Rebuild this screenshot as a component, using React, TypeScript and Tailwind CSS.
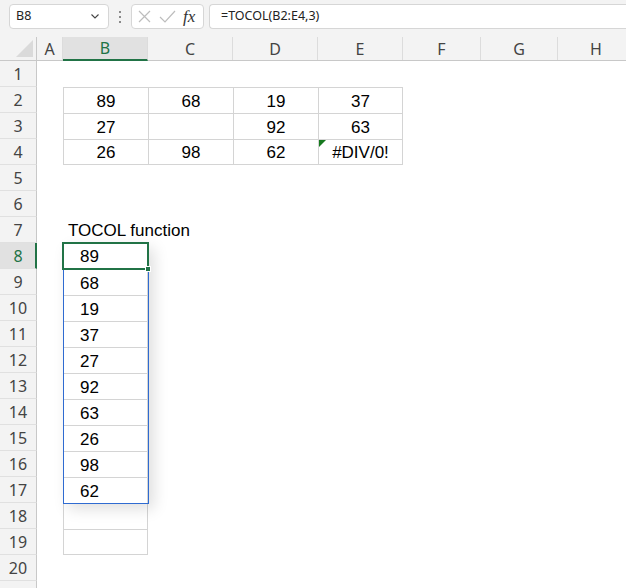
import React from "react";

const COLS = [
  { k: "A", w: "w-[26px]" },
  { k: "B", w: "w-[85px]" },
  { k: "C", w: "w-[85px]" },
  { k: "D", w: "w-[85px]" },
  { k: "E", w: "w-[85px]" },
  { k: "F", w: "w-[78px]" },
  { k: "G", w: "w-[77px]" },
  { k: "H", w: "w-[77px]" },
];

const TABLE: Record<number, string[]> = {
  2: ["89", "68", "19", "37"],
  3: ["27", "", "92", "63"],
  4: ["26", "98", "62", "#DIV/0!"],
};

const SPILL = ["89", "68", "19", "37", "27", "92", "63", "26", "98", "62"];

function Cell({ r, c, w }: { r: number; c: string; w: string }) {
  const ti = ["B", "C", "D", "E"].indexOf(c);
  if (r >= 2 && r <= 4 && ti >= 0) {
    const v = TABLE[r][ti];
    return (
      <div
        className={`${w} shrink-0 relative flex items-center justify-center pt-[2px] border-l border-t border-[#d4d4d4] ${c === "E" ? "border-r" : ""} ${r === 4 ? "border-b" : ""}`}
      >
        {r === 4 && c === "E" && (
          <div className="absolute left-0 top-0 w-0 h-0 border-t-[7px] border-r-[7px] border-t-[#17791f] border-r-transparent" />
        )}
        {v}
      </div>
    );
  }
  if (c === "B" && r === 7) {
    return (
      <div className={`${w} shrink-0 flex items-center pt-[2px] pl-[5px] whitespace-nowrap overflow-visible`}>
        TOCOL function
      </div>
    );
  }
  if (c === "B" && r >= 8 && r <= 19) {
    return (
      <div
        className={`${w} shrink-0 flex items-center pt-[2px] pl-[16px] border-l border-r border-[#d4d4d4] ${r > 8 ? "border-t" : ""} ${r === 19 ? "border-b" : ""}`}
      >
        {r <= 17 ? SPILL[r - 8] : ""}
      </div>
    );
  }
  return <div className={`${w} shrink-0`} />;
}

function Toolbar() {
  return (
    <div className="h-[37px] bg-[#f3f3f3] flex items-start pt-[4px] pl-[9px] font-['Noto_Sans',sans-serif] text-[12.5px] text-[#222]">
      <div className="w-[100px] h-[25px] bg-white border border-[#d6d6d6] rounded-[4px] flex items-center justify-between pl-[6px] pr-[9px]">
        <span>B8</span>
        <svg width="8" height="5" viewBox="0 0 8 5">
          <polyline points="0.5,0.5 4,4 7.5,0.5" fill="none" stroke="#444" strokeWidth="1.1" />
        </svg>
      </div>
      <div className="w-[22px] h-[25px] flex flex-col items-center justify-center gap-[3px]">
        <span className="w-[2px] h-[2px] bg-[#8a8a8a]" />
        <span className="w-[2px] h-[2px] bg-[#8a8a8a]" />
        <span className="w-[2px] h-[2px] bg-[#8a8a8a]" />
      </div>
      <div className="w-[73px] h-[25px] bg-white border border-[#d6d6d6] rounded-[4px] flex items-center pl-[6px]">
        <svg width="13" height="13" viewBox="0 0 13 13">
          <path d="M1 1 L12 12 M12 1 L1 12" stroke="#bdbdbd" strokeWidth="1.2" />
        </svg>
        <svg width="17" height="13" viewBox="0 0 17 13" className="ml-[8px]">
          <polyline points="1,7 6,12 16,1" fill="none" stroke="#bdbdbd" strokeWidth="1.2" />
        </svg>
        <span className="ml-[7px] font-['Liberation_Serif',serif] italic text-[17px] text-[#333] leading-none">fx</span>
      </div>
      <div className="flex-1 h-[25px] ml-[5px] bg-white border border-r-0 border-[#d6d6d6] rounded-l-[4px] flex items-center pl-[11px]">
        =TOCOL(B2:E4,3)
      </div>
    </div>
  );
}

export default function App() {
  const rows = Array.from({ length: 21 }, (_, i) => i + 1);
  return (
    <div className="w-[626px] h-[588px] overflow-hidden bg-white font-['Liberation_Sans',Arial,sans-serif] text-[17px] text-black">
      <Toolbar />
      <div className="relative">
        {/* column headers */}
        <div className="flex h-[24px] bg-[#f3f3f3] border-b border-[#c8c8c8] font-['Noto_Sans',sans-serif] text-[16px] text-[#444]">
          <div className="w-[37px] shrink-0 border-r border-[#c8c8c8] flex items-end justify-end pr-[3px] pb-[3px]">
            <svg width="17" height="17" viewBox="0 0 17 17">
              <polygon points="17,0 17,17 0,17" fill="#dadada" />
            </svg>
          </div>
          {COLS.map((c) => (
            <div
              key={c.k}
              className={`${c.w} shrink-0 flex items-center justify-center border-r border-[#dcdcdc] ${c.k === "B" ? "bg-[#e1e1e1] text-[#217346] border-b-2 border-b-[#217346] -mb-[1px]" : ""}`}
            >
              {c.k}
            </div>
          ))}
        </div>
        {rows.map((r) => (
          <div key={r} className="flex h-[26px]">
            <div
              className={`w-[37px] shrink-0 flex items-center justify-center pt-[1px] border-b border-b-[#e0e0e0] font-['Noto_Sans',sans-serif] text-[16px] ${r === 8 ? "bg-[#e1e1e1] text-[#217346] border-r-2 border-r-[#217346] pl-[1px]" : "bg-[#f3f3f3] text-[#444] border-r border-r-[#c8c8c8]"}`}
            >
              {r <= 20 ? r : ""}
            </div>
            {COLS.map((c) => (
              <Cell key={c.k} r={r} c={c.k} w={c.w} />
            ))}
          </div>
        ))}
        {/* spill range outline */}
        <div className="absolute left-[63px] top-[206px] w-[86px] h-[261px] border border-[#2f6bd1] shadow-[5px_5px_14px_rgba(0,0,0,0.13)] pointer-events-none" />
        {/* active cell */}
        <div className="absolute left-[62px] top-[205px] w-[87px] h-[28px] border-2 border-[#217346] pointer-events-none" />
        <div className="absolute left-[145px] top-[229px] w-[6px] h-[6px] bg-[#217346] border border-white pointer-events-none" />
      </div>
    </div>
  );
}
